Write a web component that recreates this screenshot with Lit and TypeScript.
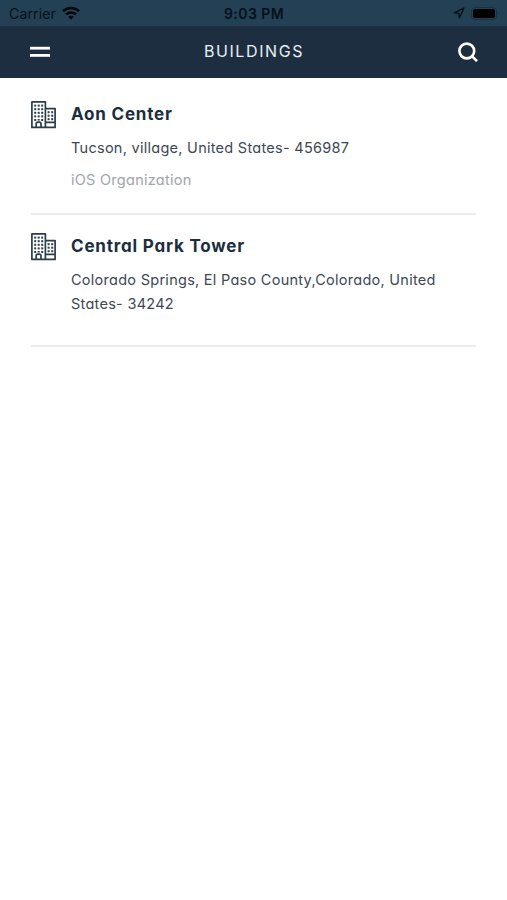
import { LitElement, html, css, svg } from "lit";
import { customElement, property } from "lit/decorators.js";

interface Building {
  name: string;
  address: string;
  organization?: string;
}

const BUILDINGS: Building[] = [
  { name: "Aon Center", address: "Tucson, village, United States- 456987", organization: "iOS Organization" },
  { name: "Central Park Tower", address: "Colorado Springs, El Paso County,Colorado, United States- 34242" },
];

@customElement("status-bar")
export class StatusBar extends LitElement {
  static styles = css`
    :host { display: grid; grid-template-columns: 1fr auto 1fr; align-items: center; height: 26px; padding: 0 8px 0 9px;
      box-sizing: border-box; background: #234055; color: #06101a; font: 14px/26px Inter, sans-serif; }
    .left, .right { display: flex; align-items: center; }
    .left { gap: 6px; }
    .right { justify-content: flex-end; gap: 6px; }
    .carrier, .time { line-height: 24px; padding-top: 2px; }
    .carrier { letter-spacing: 0.15px; }
    .time { font-weight: 600; letter-spacing: 0.45px; }
    svg { display: block; }
  `;
  render() {
    return html`
      <div class="left">
        <span class="carrier">Carrier</span>
        <svg width="18" height="14" viewBox="0 0 18 14" fill="none" stroke="#02070c" stroke-width="2.5">
          <path d="M1 5.2C5.4.9 12.6.9 17 5.2" />
          <path d="M4 8.4c2.8-2.7 7.2-2.7 10 0" />
          <path d="M9 13.6 6.2 10.8c1.6-1.4 4-1.4 5.6 0z" fill="#02070c" stroke="none" />
        </svg>
      </div>
      <span class="time">9:03 PM</span>
      <div class="right">
        <svg width="12" height="12" viewBox="0 0 12 12" fill="none" stroke="#06101a" stroke-width="1.3" stroke-linejoin="round">
          <path d="M11 1 1.2 5.8l4.6.5.5 4.6z" />
        </svg>
        <svg width="28" height="13" viewBox="0 0 28 13">
          <rect x="0.5" y="0.5" width="25" height="12" rx="3.5" fill="none" stroke="#1a3044" />
          <rect x="2" y="2" width="22" height="9" rx="2" fill="#000" />
          <path d="M26.6 4.5c1.4.6 1.4 3.4 0 4z" fill="#1a3044" />
        </svg>
      </div>
    `;
  }
}

@customElement("nav-bar")
export class NavBar extends LitElement {
  static styles = css`
    :host { display: grid; grid-template-columns: 1fr auto 1fr; align-items: center; height: 52px; padding: 0 29px 0 30px;
      box-sizing: border-box; background: #1c2e40; color: #e9eff4; }
    .title { font: 16px/24px Inter, sans-serif; letter-spacing: 1.6px; padding-bottom: 2px; }
    .search { justify-self: end; }
    svg { display: block; }
  `;
  render() {
    return html`
      <svg width="20" height="12" viewBox="0 0 20 12" fill="#fff">
        <rect y="0.8" width="20" height="2.8" />
        <rect y="8" width="20" height="2.8" />
      </svg>
      <span class="title">BUILDINGS</span>
      <svg class="search" width="20" height="20" viewBox="0 0 20 20" fill="none" stroke="#fff" stroke-width="2.6">
        <circle cx="8.8" cy="9" r="7.4" />
        <path d="m14 14.2 5 5" />
      </svg>
    `;
  }
}

const dots = (xs: number[], ys: number[]) =>
  ys.map((y) => xs.map((x) => svg`<rect x=${x} y=${y} width="2" height="2" />`));

@customElement("building-card")
export class BuildingCard extends LitElement {
  @property({ attribute: false }) building!: Building;
  static styles = css`
    :host { display: grid; grid-template-columns: 25px 1fr; column-gap: 15px; height: 132px; padding-top: 18px;
      box-sizing: border-box; border-bottom: 2px solid #ebebec; font-family: Inter, sans-serif;
      font-feature-settings: "cv11" 1; }
    .icon { display: block; }
    .name { font-size: 17px; line-height: 26px; font-weight: 700; color: #1b2e3f; letter-spacing: 0.8px; }
    .address { margin-top: 9px; font-size: 14.5px; line-height: 24px; color: #3d4854; letter-spacing: 0.27px; }
    .org { margin-top: 8px; font-size: 14.5px; line-height: 24px; color: #a1a5ad; letter-spacing: 0.26px; }
  `;
  render() {
    const b = this.building;
    return html`
      <svg class="icon" width="25" height="28" viewBox="0 0 25 28" fill="none" stroke="#2b3c4b" stroke-width="1.7" stroke-linejoin="round">
        <path d="M.9 26.4V.9h13.5v25.5zM14.4 7.6h9.7v18.8h-9.7M14.4 21.4h9.7M5.2 26.4v-3.4q0-1.8 1.8-1.8h1.2q1.8 0 1.8 1.8v3.4" />
        <g fill="#2b3c4b" stroke="none">
          ${dots([3.2, 6.7, 10.2], [3.6, 7.2, 10.8, 14.4])}
          <rect x="3.2" y="18" width="2" height="2" /><rect x="6.7" y="18" width="2" height="1.6" /><rect x="10.2" y="18" width="2" height="2" />
          ${dots([16.6, 20.2], [10.2, 13.7, 17.2])}
        </g>
      </svg>
      <div>
        <div class="name">${b.name}</div>
        <div class="address">${b.address}</div>
        ${b.organization ? html`<div class="org">${b.organization}</div>` : null}
      </div>
    `;
  }
}

@customElement("app-root")
export class AppRoot extends LitElement {
  static styles = css`
    :host { display: flex; flex-direction: column; height: 900px; background: #fff; }
    .list { display: flex; flex-direction: column; padding: 5px 31px 0; }
  `;
  render() {
    return html`
      <status-bar></status-bar>
      <nav-bar></nav-bar>
      <main class="list">${BUILDINGS.map((b) => html`<building-card .building=${b}></building-card>`)}</main>
    `;
  }
}
